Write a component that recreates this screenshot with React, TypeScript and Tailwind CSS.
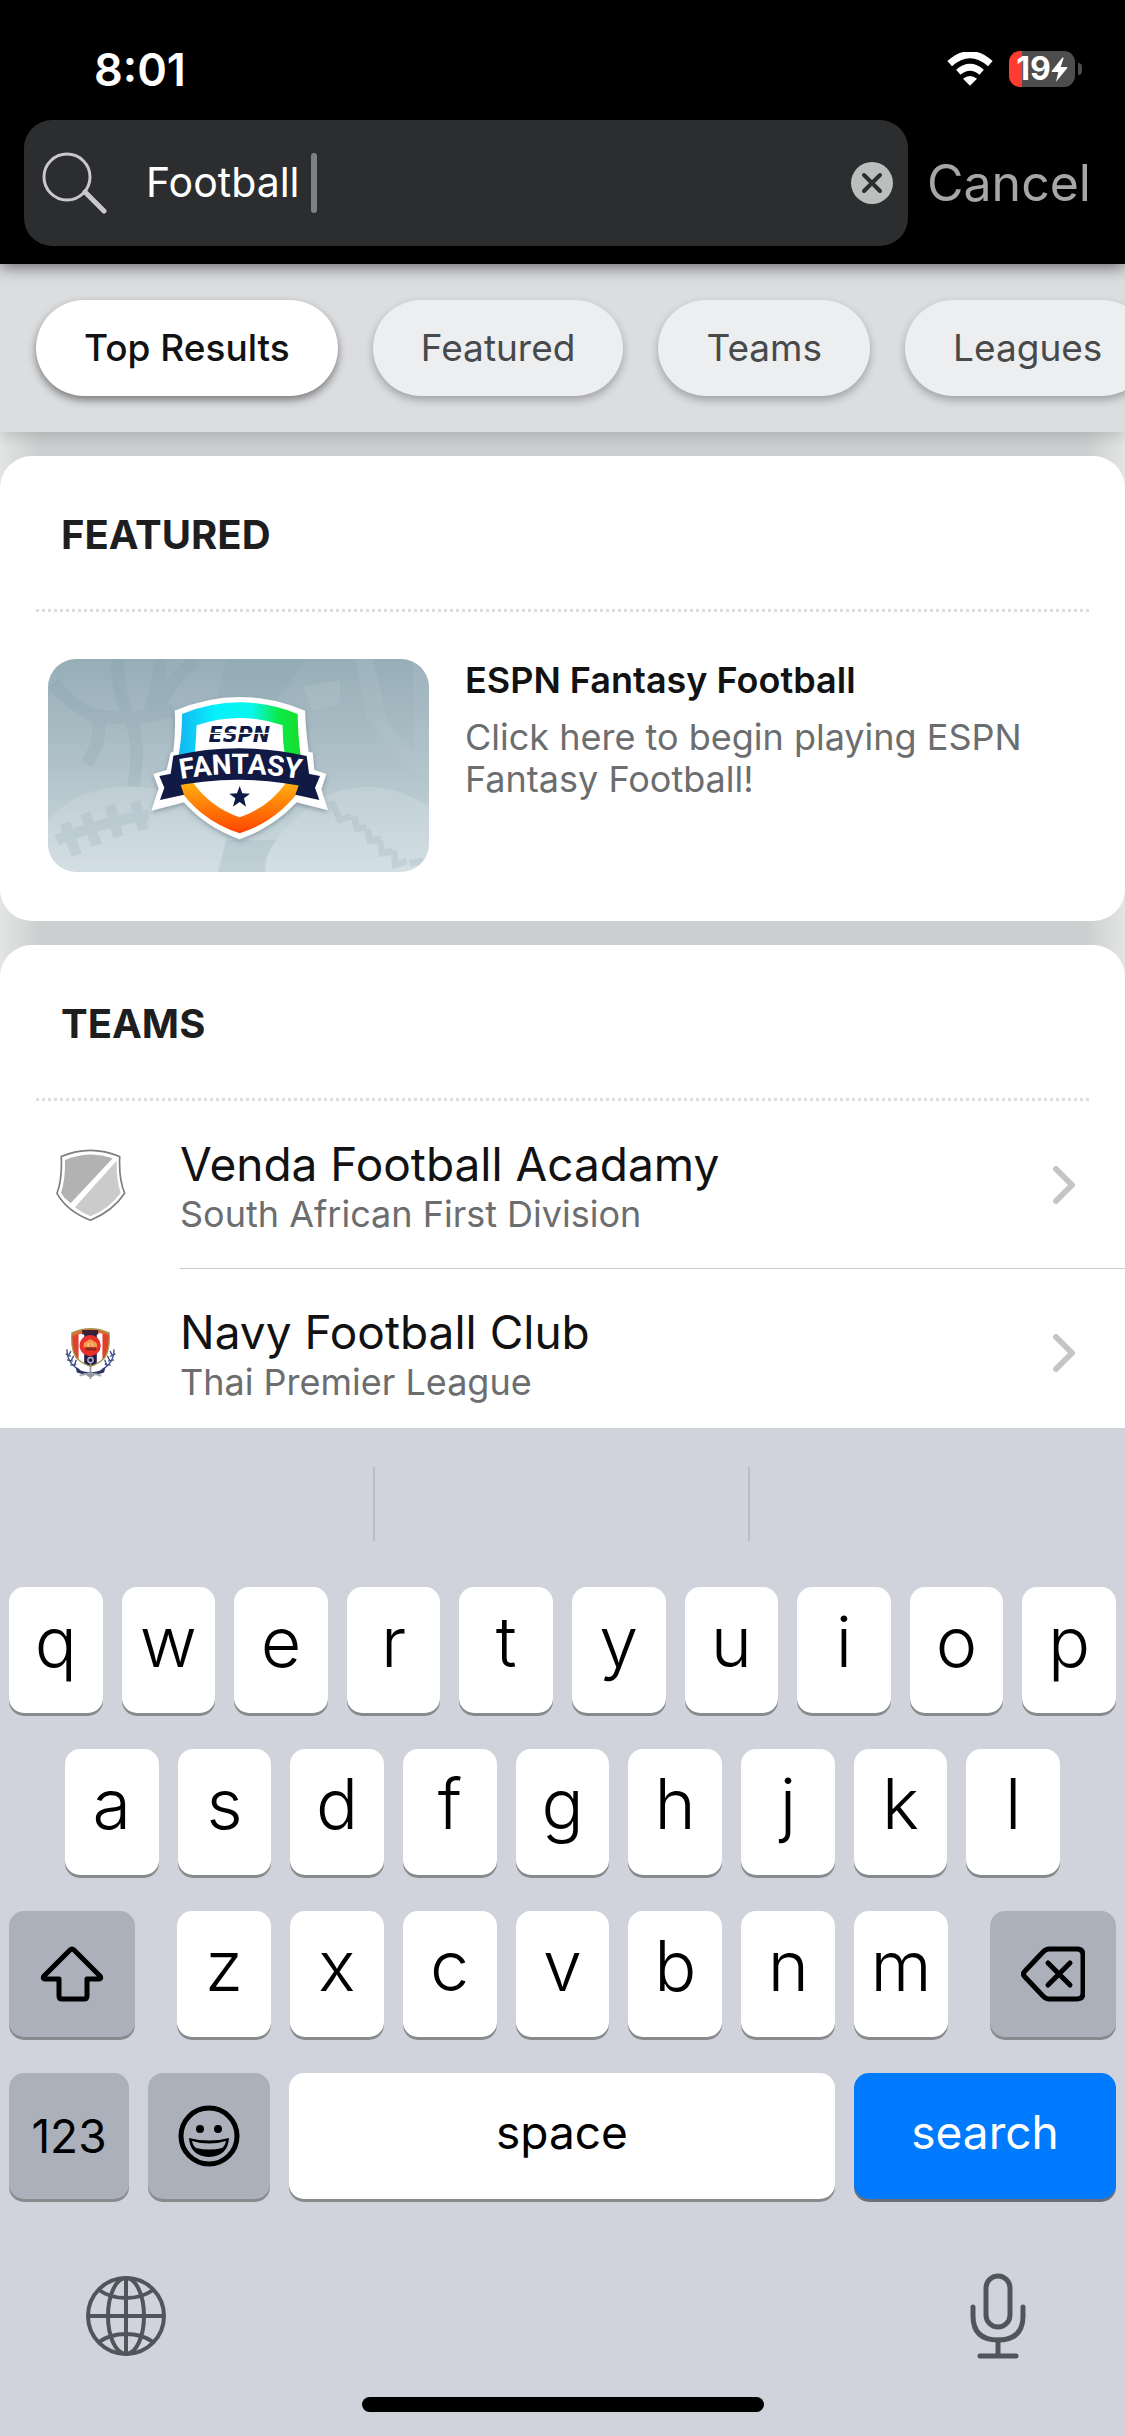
import { useState } from "react";
import type { ReactNode } from "react";

const filters = ["Top Results", "Featured", "Teams", "Leagues"];

const teams = [
    { name: "Venda Football Acadamy", league: "South African First Division", crest: <ShieldIcon /> },
    { name: "Navy Football Club", league: "Thai Premier League", crest: <NavyCrest /> },
];

const topRow = ["q", "w", "e", "r", "t", "y", "u", "i", "o", "p"];
const homeRow = ["a", "s", "d", "f", "g", "h", "j", "k", "l"];
const bottomRow = ["z", "x", "c", "v", "b", "n", "m"];

function WifiIcon() {
    return (
        <svg className="w-[46px] h-[34px]" viewBox="0 0 138 102" fill="none" aria-hidden="true">
            <path d="M8 35 Q69 -19 130 35" stroke="#fff" strokeWidth="21" />
            <path d="M34 61 Q69 31 104 61" stroke="#fff" strokeWidth="20" />
            <path d="M48 80 Q69 64 90 80 L69 101 Z" fill="#fff" />
        </svg>
    );
}

function Battery() {
    return (
        <div className="flex items-center gap-[3px]">
            <div className="flex h-9 w-[66px] items-center justify-center rounded-[11px] bg-[linear-gradient(to_right,#ff3b30_13px,#4d4d4d_13px)] text-white">
                <span className="text-[32px] leading-9 font-bold">19</span>
                <svg className="w-[17px] h-[25px]" viewBox="0 0 51 75" aria-hidden="true">
                    <path d="M35 1 L2 42 Q1 45 4 45 H22 L15 74 L49 33 Q50 30 47 30 H29 L38 3 Z" fill="#fff" />
                </svg>
            </div>
            <div className="h-3 w-1 rounded-r-full bg-[#4d4d4d]" />
        </div>
    );
}

function SearchIcon() {
    return (
        <svg className="w-[66px] h-[62px] shrink-0" viewBox="0 0 66 62" fill="none" stroke="#c9c9cb" strokeLinecap="round" aria-hidden="true">
            <circle cx="25" cy="25" r="23" strokeWidth="3" />
            <path d="M43 40 L62 59" strokeWidth="5" />
        </svg>
    );
}

function ClearIcon() {
    return (
        <svg className="w-[42px] h-[42px]" viewBox="0 0 42 42" aria-hidden="true">
            <circle cx="21" cy="21" r="21" fill="#bcbdbd" />
            <path d="M13 13 L29 29 M29 13 L13 29" stroke="#2c2d2f" strokeWidth="4" strokeLinecap="round" />
        </svg>
    );
}

function ShieldIcon() {
    return (
        <svg className="w-[71px] h-[74px]" viewBox="76 56 214 222" aria-hidden="true">
            <path d="M95 81 Q182 44 271 81 Q268 150 286 192 Q250 246 183 273 Q112 246 82 192 Q98 150 95 81 Z" fill="#fff" stroke="#7d7d7d" strokeWidth="5" />
            <path d="M106 92 Q178 62 250 86 L123 222 Q104 208 94 191 Q108 150 106 92 Z" fill="#b2b2b2" />
            <path d="M262 94 Q260 152 274 190 Q240 238 183 261 Q158 252 136 234 Z" fill="#cbcbcb" />
        </svg>
    );
}

function NavyCrest() {
    return (
        <svg className="w-[51px] h-[53px]" viewBox="106 596 154 158" aria-hidden="true">
            <g fill="none" stroke="#3c4c86" strokeWidth="4">
                <path d="M112 662 Q112 705 150 724" />
                <path d="M254 662 Q254 705 216 724" />
                <path d="M108 676 L124 684 M112 694 L130 698 M122 710 L140 708 M124 668 L116 682 M132 682 L124 698 M140 694 L134 712" />
                <path d="M258 676 L242 684 M254 694 L236 698 M244 710 L226 708 M242 668 L250 682 M234 682 L242 698 M226 694 L232 712" />
            </g>
            <path d="M138 718 Q182 746 228 718 L224 732 Q182 748 142 732 Z" fill="#2b3564" />
            <path d="M150 742 Q182 730 216 742" fill="none" stroke="#a8abb2" strokeWidth="6" />
            <clipPath id="navy-body">
                <path d="M127 613 Q183 587 239 613 Q243 660 226 688 Q208 706 183 714 Q158 706 140 688 Q123 660 127 613 Z" />
            </clipPath>
            <g clipPath="url(#navy-body)">
                <rect x="120" y="596" width="126" height="120" fill="#fff" />
                <rect x="120" y="596" width="27" height="120" fill="#e0412f" />
                <rect x="219" y="596" width="27" height="120" fill="#e0412f" />
                <rect x="164" y="596" width="38" height="120" fill="#241d4c" />
                <path d="M120 596 H246 V620 Q183 604 120 624 Z" fill="#dd6a3c" />
                <path d="M158 604 H206 V618 H158 Z" fill="#3a2133" />
            </g>
            <path d="M127 613 Q183 587 239 613 Q243 660 226 688 Q208 706 183 714 Q158 706 140 688 Q123 660 127 613 Z" fill="none" stroke="#a79a4c" strokeWidth="4" />
            <circle cx="182" cy="651" r="32" fill="#e8302b" />
            <path d="M162 656 Q160 640 172 638 Q182 626 192 638 Q204 640 203 656 Z" fill="#f59a4b" />
            <path d="M184 644 L192 654 M176 644 V654" stroke="#fbe0b4" strokeWidth="3" />
            <rect x="168" y="657" width="32" height="9" fill="#8c2a1c" />
            <circle cx="183" cy="695" r="8" fill="none" stroke="#b9bfd0" strokeWidth="4" />
            <path d="M183 704 V752 M172 738 Q183 750 194 738" fill="none" stroke="#8d929c" strokeWidth="5" />
        </svg>
    );
}

function FantasyArtwork() {
    return (
        <svg className="w-[381px] h-[213px] shrink-0 rounded-[28px]" viewBox="54 57 1143 639" role="img" aria-label="ESPN Fantasy">
            <defs>
                <linearGradient id="sky" x1="0" y1="0" x2="0" y2="1">
                    <stop offset="0" stopColor="#97aeb7" />
                    <stop offset="0.5" stopColor="#b0c1c9" />
                    <stop offset="1" stopColor="#d0dde2" />
                </linearGradient>
                <linearGradient id="rim-top" x1="0" y1="0" x2="1" y2="0">
                    <stop offset="0" stopColor="#16b4f2" />
                    <stop offset="0.3" stopColor="#05f0fb" />
                    <stop offset="0.6" stopColor="#08f6ec" />
                    <stop offset="0.82" stopColor="#0bea46" />
                    <stop offset="1" stopColor="#17dc2c" />
                </linearGradient>
                <linearGradient id="rim-bottom" x1="0" y1="0" x2="0" y2="1">
                    <stop offset="0" stopColor="#ffb010" />
                    <stop offset="1" stopColor="#ff4300" />
                </linearGradient>
                <filter id="badge-shadow" x="-10%" y="-10%" width="120%" height="125%">
                    <feDropShadow dx="0" dy="6" stdDeviation="8" floodColor="#4b6470" floodOpacity="0.5" />
                </filter>
            </defs>
            <rect x="54" y="57" width="1143" height="639" fill="url(#sky)" />

            {/* basketball seams, hockey sticks, football and baseball behind the badge */}
            <g fill="none" stroke="#7f99a5" strokeWidth="38" opacity="0.18">
                <path d="M70 130 Q120 190 180 222 Q300 250 430 210" />
                <path d="M262 57 Q262 170 310 260 Q330 340 310 440" />
                <path d="M390 57 Q392 130 360 210" />
                <path d="M500 60 Q420 110 380 220" />
                <path d="M205 240 Q215 310 170 370" />
            </g>
            <path d="M590 57 H830 L740 180 H560 Z" fill="#7f99a5" fillOpacity="0.15" />
            <path d="M820 140 L930 120 L930 190 L850 215 Z" fill="#c3d1d7" fillOpacity="0.2" />
            <path d="M975 57 H1030 L1075 250 L1150 345 V57 H1197 V405 L1160 405 L1060 300 L1010 230 Z" fill="#c3d1d7" fillOpacity="0.15" />
            <path d="M54 540 Q150 430 330 440 Q470 450 590 590 L560 696 H54 Z" fill="#dbe5e8" fillOpacity="0.25" />
            <path d="M880 470 Q1040 400 1197 500 V696 H690 Q720 580 880 470 Z" fill="#dbe5e8" fillOpacity="0.3" />
            <path d="M590 600 H740 Q705 640 705 696 H565 Z" fill="#93aab4" fillOpacity="0.25" />
            <g fill="none" stroke="#9db1ba" strokeWidth="32" opacity="0.28">
                <path d="M80 600 Q220 545 355 525" />
                <path d="M105 550 L140 645 M165 520 L200 615 M240 495 L265 590 M315 485 L340 570" />
            </g>
            <g fill="none" stroke="#9db1ba" strokeWidth="20" opacity="0.28">
                <path d="M905 485 L930 540 L962 528" />
                <path d="M972 530 L980 565 L1010 562" />
                <path d="M1012 568 L1020 602 L1052 598" />
                <path d="M1050 602 L1056 640 L1088 634" />
                <path d="M1092 632 L1096 674 L1130 664" />
                <path d="M1140 670 L1180 662" />
            </g>

            <path
                d="M434 212 Q629 130 825 212 Q828 280 836 335 L848 338 L853 390 L889 402 L874 448 L894 511 L800 487 Q730 562 629 598 Q528 562 462 487 L364 512 L386 446 L370 402 L410 390 L422 338 L430 336 Q438 270 434 212 Z"
                fill="#fff"
                filter="url(#badge-shadow)"
            />
            <path d="M456 222 Q629 152 803 222 Q804 290 812 348 H765 Q757 300 758 256 Q629 212 500 256 Q498 300 494 345 H446 Q456 290 456 222 Z" fill="url(#rim-top)" />
            <path d="M438 432 L490 428 Q540 500 629 532 Q716 502 768 428 L820 434 Q750 540 629 580 Q506 540 438 432 Z" fill="url(#rim-bottom)" />
            <path d="M388 408 L440 398 L462 464 L390 480 L403 443 Z" fill="#101a45" />
            <path d="M870 408 L820 398 L796 464 L868 480 L855 443 Z" fill="#101a45" />
            <path d="M430 347 Q629 302 830 348 L843 444 Q629 396 416 442 Z" fill="#101a45" />
            <path id="fantasy-arc" d="M432 421 Q629 382 832 421" fill="none" />
            <text fontFamily="Roboto, Inter, sans-serif" fontSize="84" fontWeight="700" fill="#fff" textAnchor="middle">
                <textPath href="#fantasy-arc" startOffset="50%">FANTASY</textPath>
            </text>
            <text x="628" y="307" fontFamily="'DejaVu Sans', sans-serif" fontSize="62" fontWeight="700" fontStyle="italic" fill="#101a45" textAnchor="middle">ESPN</text>
            <path d="M536 280 H722" stroke="#fff" strokeWidth="4" />
            <path d="M629 438 L637 460 L660 461 L642 475 L648 500 L629 486 L609 500 L616 475 L598 461 L621 460 Z" fill="#101a45" />
        </svg>
    );
}

function Chevron() {
    return (
        <svg className="w-[22px] h-[38px] shrink-0" viewBox="0 0 22 38" fill="none" aria-hidden="true">
            <path d="M3 3 L19 19 L3 35" stroke="#c5c5c7" strokeWidth="6" strokeLinecap="round" strokeLinejoin="round" />
        </svg>
    );
}

function ShiftIcon() {
    return (
        <svg className="w-16 h-14" viewBox="0 0 64 56" fill="none" stroke="#000" strokeWidth="5" strokeLinejoin="round" aria-hidden="true">
            <path d="M30 4 Q32 2 34 4 L60 30 Q62 33 58 33 H47 V50 Q47 53 44 53 H22 Q19 53 19 50 V33 H6 Q2 33 4 30 Z" />
        </svg>
    );
}

function DeleteIcon() {
    return (
        <svg className="w-16 h-14" viewBox="0 0 64 56" fill="none" stroke="#000" strokeWidth="5" strokeLinecap="round" strokeLinejoin="round" aria-hidden="true">
            <path d="M28 3 H56 Q62 3 62 9 V47 Q62 53 56 53 H28 Q25 53 22 50 L4 31 Q1 28 4 25 L22 6 Q25 3 28 3 Z" />
            <path d="M27 17 L49 39 M49 17 L27 39" />
        </svg>
    );
}

function EmojiIcon() {
    return (
        <svg className="w-[62px] h-[62px]" viewBox="0 0 62 62" aria-hidden="true">
            <circle cx="31" cy="31" r="28" fill="none" stroke="#000" strokeWidth="5" />
            <ellipse cx="22" cy="24" rx="4" ry="4" />
            <ellipse cx="40" cy="24" rx="4" ry="4" />
            <path d="M11 33 Q31 38 51 33 Q50 51 31 52 Q12 51 11 33 Z" />
            <path d="M14 36 Q31 41 48 36 Q47 41 44 43 Q31 46 18 43 Q15 41 14 36 Z" fill="#abb0bb" />
        </svg>
    );
}

function GlobeIcon() {
    return (
        <svg className="w-20 h-20" viewBox="0 0 80 80" fill="none" stroke="#50555c" strokeWidth="4" aria-hidden="true">
            <circle cx="40" cy="40" r="38" />
            <ellipse cx="40" cy="40" rx="18" ry="38" />
            <path d="M40 2 V78 M2 40 H78" />
            <path d="M13 14 Q24 22 40 22 Q56 22 67 14" />
            <path d="M13 66 Q24 58 40 58 Q56 58 67 66" />
        </svg>
    );
}

function MicIcon() {
    return (
        <svg className="w-14 h-[86px]" viewBox="0 0 56 86" fill="none" stroke="#50555c" strokeWidth="5" strokeLinecap="round" aria-hidden="true">
            <rect x="16" y="3" width="24" height="51" rx="12" />
            <path d="M3 34 V43 Q3 67 28 67 Q53 67 53 43 V34" />
            <path d="M28 67 V83 M10 83 H46" />
        </svg>
    );
}

function Section({ title, children }: { title: string; children: ReactNode }) {
    return (
        <section className="rounded-[32px] bg-white">
            <h2 className="flex h-[153px] items-center pl-[61px] pt-1 text-[40px] font-bold text-[#1d1e1f]">{title}</h2>
            <div className="mx-9 h-[3px] bg-[repeating-linear-gradient(to_right,#dcdddf_0_3px,transparent_3px_6px)]" />
            {children}
        </section>
    );
}

function LetterKey({ letter }: { letter: string }) {
    return (
        <button className="flex h-[126px] flex-1 items-center justify-center rounded-[15px] bg-white pb-4 text-[70px] leading-none font-light shadow-[0_3px_0_#888a8d]">
            {letter}
        </button>
    );
}

function Keyboard() {
    return (
        <div className="relative shrink-0 bg-[#d0d3db] text-black">
            <div className="grid h-[159px] grid-cols-3 divide-x-2 divide-[#bbbdc2] pt-[39px] pb-[46px]">
                <div />
                <div />
                <div />
            </div>

            <div className="flex flex-col gap-9 px-[9px]">
                <div className="flex gap-[19px]">
                    {topRow.map((letter) => (
                        <LetterKey key={letter} letter={letter} />
                    ))}
                </div>
                <div className="flex gap-[19px] px-14">
                    {homeRow.map((letter) => (
                        <LetterKey key={letter} letter={letter} />
                    ))}
                </div>
                <div className="flex gap-[42px]">
                    <button aria-label="shift" className="flex h-[126px] w-[126px] items-center justify-center rounded-[15px] bg-[#abb0bb] shadow-[0_3px_0_#888a8d]">
                        <ShiftIcon />
                    </button>
                    <div className="flex flex-1 gap-[19px]">
                        {bottomRow.map((letter) => (
                            <LetterKey key={letter} letter={letter} />
                        ))}
                    </div>
                    <button aria-label="delete" className="flex h-[126px] w-[126px] items-center justify-center rounded-[15px] bg-[#abb0bb] shadow-[0_3px_0_#888a8d]">
                        <DeleteIcon />
                    </button>
                </div>
                <div className="flex gap-[19px] text-[46px] leading-none">
                    <button className="h-[126px] w-[120px] rounded-[15px] bg-[#abb0bb] shadow-[0_3px_0_#888a8d]">123</button>
                    <button aria-label="emoji" className="flex h-[126px] w-[122px] items-center justify-center rounded-[15px] bg-[#abb0bb] shadow-[0_3px_0_#888a8d]">
                        <EmojiIcon />
                    </button>
                    <button className="h-[126px] flex-1 rounded-[15px] bg-white pb-2 shadow-[0_3px_0_#888a8d]">space</button>
                    <button className="h-[126px] w-[262px] rounded-[15px] bg-[#007aff] pb-2 text-white shadow-[0_3px_0_#6b7078]">search</button>
                </div>
            </div>

            <div className="flex h-[198px] items-center justify-between pt-9 pr-[99px] pl-[86px]">
                <button aria-label="next keyboard">
                    <GlobeIcon />
                </button>
                <button aria-label="dictate">
                    <MicIcon />
                </button>
            </div>
            <div className="pb-6">
                <div className="mx-auto h-[15px] w-[402px] rounded-full bg-black" />
            </div>
        </div>
    );
}

export default function App() {
    const [query, setQuery] = useState("Football ");
    const [active, setActive] = useState("Top Results");

    return (
        <div className="flex h-screen flex-col overflow-hidden bg-white font-[Inter,'Liberation_Sans',sans-serif]">
            <header className="relative z-20 shrink-0 bg-black pb-[18px] shadow-[0_2px_16px_rgba(0,0,0,0.6)]">
                <div className="flex h-[120px] items-center justify-between pt-[18px] pr-[43px] pl-[94px]">
                    <time className="text-[45px] leading-none font-semibold text-white">8:01</time>
                    <div className="flex items-center gap-4">
                        <WifiIcon />
                        <Battery />
                    </div>
                </div>
                <div className="flex items-center pl-6">
                    <div className="flex h-[126px] flex-1 items-center rounded-[28px] bg-[#2c2d2f] pr-[15px] pl-[18px]">
                        <SearchIcon />
                        <input
                            aria-label="Search"
                            value={query}
                            onChange={(e) => setQuery(e.target.value)}
                            className="ml-[38px] field-sizing-content bg-transparent text-[41px] text-white outline-none"
                        />
                        <div className="h-[60px] w-1.5 rounded-full bg-[#7f8081]" />
                        <button aria-label="Clear" className="ml-auto" onClick={() => setQuery("")}>
                            <ClearIcon />
                        </button>
                    </div>
                    <button className="w-[217px] pl-[19px] text-left text-[50px] text-[#a6a6a7]">Cancel</button>
                </div>
            </header>

            <nav className="relative z-10 flex h-[168px] shrink-0 gap-[35px] overflow-hidden bg-[#dcdddf] px-9 pt-9 shadow-[0_4px_14px_rgba(0,0,0,0.15)]">
                {filters.map((filter) => (
                    <button
                        key={filter}
                        onClick={() => setActive(filter)}
                        className={`h-24 shrink-0 rounded-full px-12 text-[37px] whitespace-nowrap ${
                            filter === active
                                ? "bg-white font-medium text-[#121213] shadow-[0_4px_8px_rgba(0,0,0,0.45)]"
                                : "bg-[#edeef0] text-[#48494a] shadow-[0_4px_9px_rgba(0,0,0,0.28)]"
                        }`}
                    >
                        {filter}
                    </button>
                ))}
            </nav>

            <main className="flex min-h-0 flex-1 flex-col gap-6 bg-[linear-gradient(to_right,#e3e4e4,#cdcecf_40px,#cdcecf_calc(100%-40px),#e3e4e4)] pt-6">
                <Section title="FEATURED">
                    <a href="#fantasy" className="flex gap-9 px-12 pt-[47px] pb-[49px]">
                        <FantasyArtwork />
                        <div className="min-w-0">
                            <h3 className="text-[36px] leading-[42px] font-semibold text-[#121213]">ESPN Fantasy Football</h3>
                            <p className="mt-[15px] text-[36px] leading-[42px] text-[#6c6d6f]">Click here to begin playing ESPN Fantasy Football!</p>
                        </div>
                    </a>
                </Section>

                <Section title="TEAMS">
                    <ul className="pb-12">
                        {teams.map((team) => (
                            <li key={team.name}>
                                <a href="#team" className="flex h-[168px]">
                                    <span className="flex w-[180px] shrink-0 items-center justify-center">{team.crest}</span>
                                    <span className="flex flex-1 items-center justify-between border-b border-[#cbccce] pr-[50px]">
                                        <span className="pt-1">
                                            <span className="block text-[46px] leading-[54px] text-[#121213]">{team.name}</span>
                                            <span className="block text-[36px] leading-[46px] text-[#6c6d6f]">{team.league}</span>
                                        </span>
                                        <Chevron />
                                    </span>
                                </a>
                            </li>
                        ))}
                    </ul>
                </Section>
            </main>

            <Keyboard />
        </div>
    );
}
